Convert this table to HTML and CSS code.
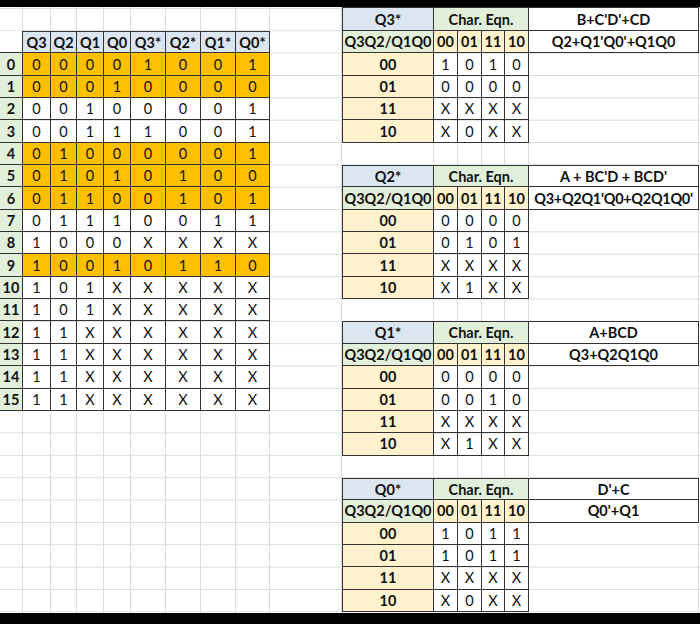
FILE: index.html
```html
<!DOCTYPE html>
<html>
<head>
<meta charset="utf-8">
<link rel="stylesheet" href="styles.css">
</head>
<body>
<div class="sheet">
  <div class="left">
    <div class="truth">
      <div class="rn top"></div><div class="hd">Q3</div><div class="hd">Q2</div><div class="hd">Q1</div><div class="hd">Q0</div><div class="hd">Q3*</div><div class="hd">Q2*</div><div class="hd">Q1*</div><div class="hd">Q0*</div>
      <div class="rn">0</div><div class="hl">0</div><div class="hl">0</div><div class="hl">0</div><div class="hl">0</div><div class="hl">1</div><div class="hl">0</div><div class="hl">0</div><div class="hl">1</div>
      <div class="rn">1</div><div class="hl">0</div><div class="hl">0</div><div class="hl">0</div><div class="hl">1</div><div class="hl">0</div><div class="hl">0</div><div class="hl">0</div><div class="hl">0</div>
      <div class="rn">2</div><div>0</div><div>0</div><div>1</div><div>0</div><div>0</div><div>0</div><div>0</div><div>1</div>
      <div class="rn">3</div><div>0</div><div>0</div><div>1</div><div>1</div><div>1</div><div>0</div><div>0</div><div>1</div>
      <div class="rn">4</div><div class="hl">0</div><div class="hl">1</div><div class="hl">0</div><div class="hl">0</div><div class="hl">0</div><div class="hl">0</div><div class="hl">0</div><div class="hl">1</div>
      <div class="rn">5</div><div class="hl">0</div><div class="hl">1</div><div class="hl">0</div><div class="hl">1</div><div class="hl">0</div><div class="hl">1</div><div class="hl">0</div><div class="hl">0</div>
      <div class="rn">6</div><div class="hl">0</div><div class="hl">1</div><div class="hl">1</div><div class="hl">0</div><div class="hl">0</div><div class="hl">1</div><div class="hl">0</div><div class="hl">1</div>
      <div class="rn">7</div><div>0</div><div>1</div><div>1</div><div>1</div><div>0</div><div>0</div><div>1</div><div>1</div>
      <div class="rn">8</div><div>1</div><div>0</div><div>0</div><div>0</div><div>X</div><div>X</div><div>X</div><div>X</div>
      <div class="rn">9</div><div class="hl">1</div><div class="hl">0</div><div class="hl">0</div><div class="hl">1</div><div class="hl">0</div><div class="hl">1</div><div class="hl">1</div><div class="hl">0</div>
      <div class="rn">10</div><div>1</div><div>0</div><div>1</div><div>X</div><div>X</div><div>X</div><div>X</div><div>X</div>
      <div class="rn">11</div><div>1</div><div>0</div><div>1</div><div>X</div><div>X</div><div>X</div><div>X</div><div>X</div>
      <div class="rn">12</div><div>1</div><div>1</div><div>X</div><div>X</div><div>X</div><div>X</div><div>X</div><div>X</div>
      <div class="rn">13</div><div>1</div><div>1</div><div>X</div><div>X</div><div>X</div><div>X</div><div>X</div><div>X</div>
      <div class="rn">14</div><div>1</div><div>1</div><div>X</div><div>X</div><div>X</div><div>X</div><div>X</div><div>X</div>
      <div class="rn">15</div><div>1</div><div>1</div><div>X</div><div>X</div><div>X</div><div>X</div><div>X</div><div>X</div>
    </div>
  </div>
  <div class="right">
    <div class="kmap first">
      <div class="name t l">Q3*</div><div class="char t">Char. Eqn.</div><div class="eqn t">B+C'D'+CD</div>
      <div class="vars l">Q3Q2/Q1Q0</div><div class="col">00</div><div class="col">01</div><div class="col">11</div><div class="col">10</div><div class="eqn">Q2+Q1'Q0'+Q1Q0</div>
      <div class="row l">00</div><div>1</div><div>0</div><div>1</div><div>0</div><div class="blank"></div>
      <div class="row l">01</div><div>0</div><div>0</div><div>0</div><div>0</div><div class="blank"></div>
      <div class="row l">11</div><div>X</div><div>X</div><div>X</div><div>X</div><div class="blank"></div>
      <div class="row l">10</div><div>X</div><div>0</div><div>X</div><div>X</div><div class="blank"></div>
    </div>
    <div class="kmap">
      <div class="name t l">Q2*</div><div class="char t">Char. Eqn.</div><div class="eqn t">A + BC'D + BCD'</div>
      <div class="vars l">Q3Q2/Q1Q0</div><div class="col">00</div><div class="col">01</div><div class="col">11</div><div class="col">10</div><div class="eqn tight">Q3+Q2Q1'Q0+Q2Q1Q0'</div>
      <div class="row l">00</div><div>0</div><div>0</div><div>0</div><div>0</div><div class="blank"></div>
      <div class="row l">01</div><div>0</div><div>1</div><div>0</div><div>1</div><div class="blank"></div>
      <div class="row l">11</div><div>X</div><div>X</div><div>X</div><div>X</div><div class="blank"></div>
      <div class="row l">10</div><div>X</div><div>1</div><div>X</div><div>X</div><div class="blank"></div>
    </div>
    <div class="kmap">
      <div class="name t l">Q1*</div><div class="char t">Char. Eqn.</div><div class="eqn t">A+BCD</div>
      <div class="vars l">Q3Q2/Q1Q0</div><div class="col">00</div><div class="col">01</div><div class="col">11</div><div class="col">10</div><div class="eqn">Q3+Q2Q1Q0</div>
      <div class="row l">00</div><div>0</div><div>0</div><div>0</div><div>0</div><div class="blank"></div>
      <div class="row l">01</div><div>0</div><div>0</div><div>1</div><div>0</div><div class="blank"></div>
      <div class="row l">11</div><div>X</div><div>X</div><div>X</div><div>X</div><div class="blank"></div>
      <div class="row l">10</div><div>X</div><div>1</div><div>X</div><div>X</div><div class="blank"></div>
    </div>
    <div class="kmap">
      <div class="name t l">Q0*</div><div class="char t">Char. Eqn.</div><div class="eqn t">D'+C</div>
      <div class="vars l">Q3Q2/Q1Q0</div><div class="col">00</div><div class="col">01</div><div class="col">11</div><div class="col">10</div><div class="eqn">Q0'+Q1</div>
      <div class="row l">00</div><div>1</div><div>0</div><div>1</div><div>1</div><div class="blank"></div>
      <div class="row l">01</div><div>1</div><div>0</div><div>1</div><div>1</div><div class="blank"></div>
      <div class="row l">11</div><div>X</div><div>X</div><div>X</div><div>X</div><div class="blank"></div>
      <div class="row l">10</div><div>X</div><div>0</div><div>X</div><div>X</div><div class="blank"></div>
    </div>
  </div>
</div>
</body>
</html>
```
FILE: styles.css
```css
html, body {
  margin: 0;
  padding: 0;
  background: #000;
}
body {
  width: 700px;
  height: 624px;
  overflow: hidden;
  font-family: "Lato", "Liberation Sans", sans-serif;
  font-size: 14.5px;
  color: #111;
}
.sheet {
  margin-top: 7px;
  height: 606px;
  display: flex;
  overflow: hidden;
  background-color: #fff;
  background-image:
    linear-gradient(to bottom, transparent 0.65px, #dcdcdc 0.65px, #dcdcdc 1.65px, transparent 1.65px),
    linear-gradient(#dcdcdc, #dcdcdc), linear-gradient(#dcdcdc, #dcdcdc), linear-gradient(#dcdcdc, #dcdcdc),
    linear-gradient(#dcdcdc, #dcdcdc), linear-gradient(#dcdcdc, #dcdcdc), linear-gradient(#dcdcdc, #dcdcdc),
    linear-gradient(#dcdcdc, #dcdcdc), linear-gradient(#dcdcdc, #dcdcdc), linear-gradient(#dcdcdc, #dcdcdc),
    linear-gradient(#dcdcdc, #dcdcdc), linear-gradient(#dcdcdc, #dcdcdc), linear-gradient(#dcdcdc, #dcdcdc),
    linear-gradient(#dcdcdc, #dcdcdc), linear-gradient(#dcdcdc, #dcdcdc), linear-gradient(#dcdcdc, #dcdcdc),
    linear-gradient(#dcdcdc, #dcdcdc);
  background-size:
    100% 22.35px,
    1px 100%, 1px 100%, 1px 100%, 1px 100%, 1px 100%, 1px 100%, 1px 100%, 1px 100%,
    1px 100%, 1px 100%, 1px 100%, 1px 100%, 1px 100%, 1px 100%, 1px 100%, 1px 100%;
  background-position:
    0 0,
    22px 0, 50px 0, 76px 0, 103px 0, 130px 0, 165px 0, 200px 0, 235px 0,
    269px 0, 341px 0, 433px 0, 457px 0, 481px 0, 504px 0, 528px 0, 698px 0;
  background-repeat:
    repeat,
    no-repeat, no-repeat, no-repeat, no-repeat, no-repeat, no-repeat, no-repeat, no-repeat,
    no-repeat, no-repeat, no-repeat, no-repeat, no-repeat, no-repeat, no-repeat, no-repeat;
}
.left {
  width: 342px;
  flex: none;
}
.truth {
  margin-top: 24px;
  display: grid;
  grid-template-columns: 23px 28px 26px 27px 27px 35px 35px 35px 34px;
  grid-auto-rows: 22.35px;
}
.truth > div {
  box-sizing: border-box;
  border-right: 1px solid #333;
  border-bottom: 1px solid #333;
  display: flex;
  align-items: center;
  justify-content: center;
}
.truth .rn {
  background: #e2efda;
  font-weight: bold;
}
.truth .rn.top {
  background: #fff;
}
.truth .hd {
  background: #dce6f1;
  font-weight: bold;
  border-top: 1px solid #333;
}
.truth .hl {
  background: #ffc000;
}
.right {
  width: 358px;
  flex: none;
  display: flex;
  flex-direction: column;
  gap: 22.35px;
}
.kmap {
  display: grid;
  grid-template-columns: 92px 24px 24px 23px 24px 170px;
  grid-auto-rows: 22.35px;
}
.kmap.first {
  grid-template-rows: 24px;
}
.kmap > div {
  box-sizing: border-box;
  border-right: 1px solid #333;
  border-bottom: 1px solid #333;
  display: flex;
  align-items: center;
  justify-content: center;
  white-space: nowrap;
}
.kmap > .t {
  border-top: 1px solid #333;
}
.kmap > .l {
  border-left: 1px solid #333;
}
.kmap > .blank {
  border: none;
}
.kmap .name {
  background: #dce6f1;
  font-weight: bold;
}
.kmap .char {
  grid-column: span 4;
  background: #e2efda;
  font-weight: bold;
}
.kmap .eqn {
  font-weight: bold;
  background: #fff;
}
.kmap .eqn.tight {
  letter-spacing: -0.3px;
}
.kmap .vars {
  background: #e2efda;
  font-weight: bold;
}
.kmap .col {
  background: #fff2cc;
  font-weight: bold;
}
.kmap .row {
  background: #fff2cc;
  font-weight: bold;
}
```
